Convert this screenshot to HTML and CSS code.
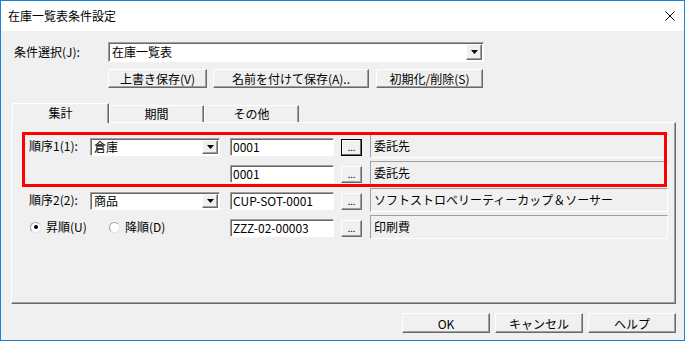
FILE: index.html
```html
<!DOCTYPE html>
<html lang="ja">
<head>
  <meta charset="UTF-8" />
  <title>在庫一覧表条件設定</title>
  <link rel="stylesheet" href="styles.css">
</head>
<body>
  <div class="window">
    <div class="titlebar">
      <span class="title">在庫一覧表条件設定</span>
      <svg class="close" width="10" height="10" viewBox="0 0 10 10">
        <path d="M0.5 0.5 L9.5 9.5 M9.5 0.5 L0.5 9.5" stroke="#000" stroke-width="1" fill="none"/>
      </svg>
    </div>

    <div class="content">
      <div class="cond-row">
        <label class="cond-label">条件選択(J):</label>
        <div class="combo combo-wide">
          <span class="combo-text">在庫一覧表</span>
          <span class="drop"><svg width="7" height="4" viewBox="0 0 7 4"><path d="M0 0 H7 L3.5 4 Z" fill="#000"/></svg></span>
        </div>
      </div>

      <div class="cond-buttons">
        <button class="btn btn-save">上書き保存(V)</button>
        <button class="btn btn-saveas">名前を付けて保存(A)..</button>
        <button class="btn btn-reset">初期化/削除(S)</button>
      </div>

      <div class="tabs">
        <div class="tab active">集計</div>
        <div class="tab">期間</div>
        <div class="tab">その他</div>
      </div>

      <div class="panel">
        <div class="highlight"></div>

        <div class="row">
          <span class="row-label">順序1(1):</span>
          <div class="combo combo-small">
            <span class="combo-text">倉庫</span>
            <span class="drop"><svg width="7" height="4" viewBox="0 0 7 4"><path d="M0 0 H7 L3.5 4 Z" fill="#000"/></svg></span>
          </div>
          <div class="edit">0001</div>
          <button class="btn dots default">...</button>
          <div class="static">委託先</div>
        </div>

        <div class="row">
          <span class="row-label"></span>
          <div class="spacer"></div>
          <div class="edit">0001</div>
          <button class="btn dots">...</button>
          <div class="static">委託先</div>
        </div>

        <div class="row row-gap">
          <span class="row-label">順序2(2):</span>
          <div class="combo combo-small">
            <span class="combo-text">商品</span>
            <span class="drop"><svg width="7" height="4" viewBox="0 0 7 4"><path d="M0 0 H7 L3.5 4 Z" fill="#000"/></svg></span>
          </div>
          <div class="edit">CUP-SOT-0001</div>
          <button class="btn dots">...</button>
          <div class="static">ソフトストロベリーティーカップ＆ソーサー</div>
        </div>

        <div class="row">
          <div class="radios">
            <label class="radio first"><span class="circle checked"></span>昇順(U)</label>
            <label class="radio"><span class="circle"></span>降順(D)</label>
          </div>
          <div class="edit">ZZZ-02-00003</div>
          <button class="btn dots">...</button>
          <div class="static">印刷費</div>
        </div>
      </div>

      <div class="footer">
        <button class="btn btn-foot">OK</button>
        <button class="btn btn-foot">キャンセル</button>
        <button class="btn btn-foot">ヘルプ</button>
      </div>
    </div>
  </div>
</body>
</html>
```

FILE: styles.css
```css
body {margin: 0; font-family: "Noto Sans CJK JP", sans-serif; font-size: 12px; line-height: 14px; color: #000; background: #fff;}
.window {width: 685px; height: 341px; box-sizing: border-box; border: 1px solid #1883d7; background: #f0f0f0; display: flex; flex-direction: column;}

.titlebar {height: 30px; flex: none; background: #fff; display: flex; align-items: center; justify-content: space-between; padding: 0 9px 0 7px;}
.title {font-size: 12px;}

.content {flex: 1; padding: 11px 8px 0 10px; display: flex; flex-direction: column;}

/* raised / sunken classic borders */
.btn {font-family: inherit; font-size: 12px; color: #000; padding: 0; margin: 0; background: #f0f0f0; box-sizing: border-box;
  border: 1px solid; border-color: #fff #696969 #696969 #fff; box-shadow: inset -1px -1px #a0a0a0; display: flex; align-items: center; justify-content: center;}
.edit {background: #fff; box-sizing: border-box; border: 1px solid; border-color: #a0a0a0 #fff #fff #a0a0a0; box-shadow: inset 1px 1px #696969;}
.static {box-sizing: border-box; border: 1px solid; border-color: #a0a0a0 #fff #fff #a0a0a0;}

.cond-row {display: flex; align-items: center; height: 20px;}
.cond-label {width: 97px; padding-left: 3px; box-sizing: border-box;}

.combo {display: flex; align-items: center; background: #fff; box-sizing: border-box; border: 1px solid; border-color: #a0a0a0 #fff #fff #a0a0a0; box-shadow: inset 1px 1px #696969;}
.combo-text {padding-left: 3px;}
.combo-wide {width: 376px; height: 20px;}
.drop {margin-left: auto; margin-right: 1px; width: 16px; height: 16px; box-sizing: border-box; background: #f0f0f0;
  border: 1px solid; border-color: #fff #696969 #696969 #fff; box-shadow: inset -1px -1px #a0a0a0; display: flex; align-items: center; justify-content: center;}
.combo-small .drop {height: 14px;}

.cond-buttons {display: flex; margin: 7px 0 0 97px; height: 19px;}
.btn-save {width: 99px;}
.btn-saveas {width: 156px; margin-left: 6px;}
.btn-reset {width: 107px; margin-left: 7px;}

.tabs {display: flex; align-items: flex-end; margin: 15px 0 0 1px; height: 19px;}
.tab {width: 95px; height: 17px; box-sizing: border-box; border-top: 1px solid #fff; border-left: 1px solid #fff; border-right: 1px solid #696969;
  box-shadow: inset -1px 0 #a0a0a0; text-align: center; line-height: 16px; background: #f0f0f0;}
.tab.active {width: 97px; height: 20px; margin-bottom: -1px; position: relative; z-index: 1; line-height: 17px;}

.panel {position: relative; height: 182px; box-sizing: border-box; border-top: 1px solid #fff; border-left: 1px solid #fff;
  border-right: 1px solid #696969; border-bottom: 1px solid #696969; box-shadow: inset -1px -1px #a0a0a0; padding: 11px 7px 0 17px;}
.highlight {position: absolute; left: 10px; top: 9px; width: 645px; height: 55px; box-sizing: border-box; border: 3px solid #f00; pointer-events: none; z-index: 2;}

.row {display: flex; align-items: center; height: 24px; margin-bottom: 3px;}
.row-gap {margin-top: 1px;}
.row-label {width: 61px; flex: none;}
.combo-small {width: 130px; height: 18px; margin-top: 2px; flex: none;}
.spacer {width: 130px; flex: none;}
.row .edit {width: 104px; height: 18px; margin: 2px 0 0 10px; padding-left: 2px; line-height: 15px; flex: none;}
.dots {width: 21px; height: 17px; margin: 2px 0 0 7px; font-size: 9px; line-height: 9px; align-items: flex-end; padding-bottom: 3px; flex: none;}
.dots.default {border-color: #000; box-shadow: inset -1px -1px #696969, inset 1px 1px #fff;}
.static {flex: 1; height: 24px; margin-left: 8px; padding-left: 3px; display: flex; align-items: center;}

.radios {width: 191px; display: flex; align-items: center; flex: none;}
.radio {display: flex; align-items: center;}
.radio.first {width: 79px; margin-left: 1px;}
.circle {width: 11px; height: 11px; box-sizing: border-box; border-radius: 50%; background: #fff; border: 1px solid; border-color: #a0a0a0 #e3e3e3 #e3e3e3 #a0a0a0;
  margin-right: 5px; display: flex; align-items: center; justify-content: center;}
.circle.checked::after {content: ""; width: 4px; height: 4px; border-radius: 50%; background: #000;}

.footer {display: flex; justify-content: flex-end; gap: 5px; margin-top: 9px;}
.btn-foot {width: 88px; height: 20px;}
```
